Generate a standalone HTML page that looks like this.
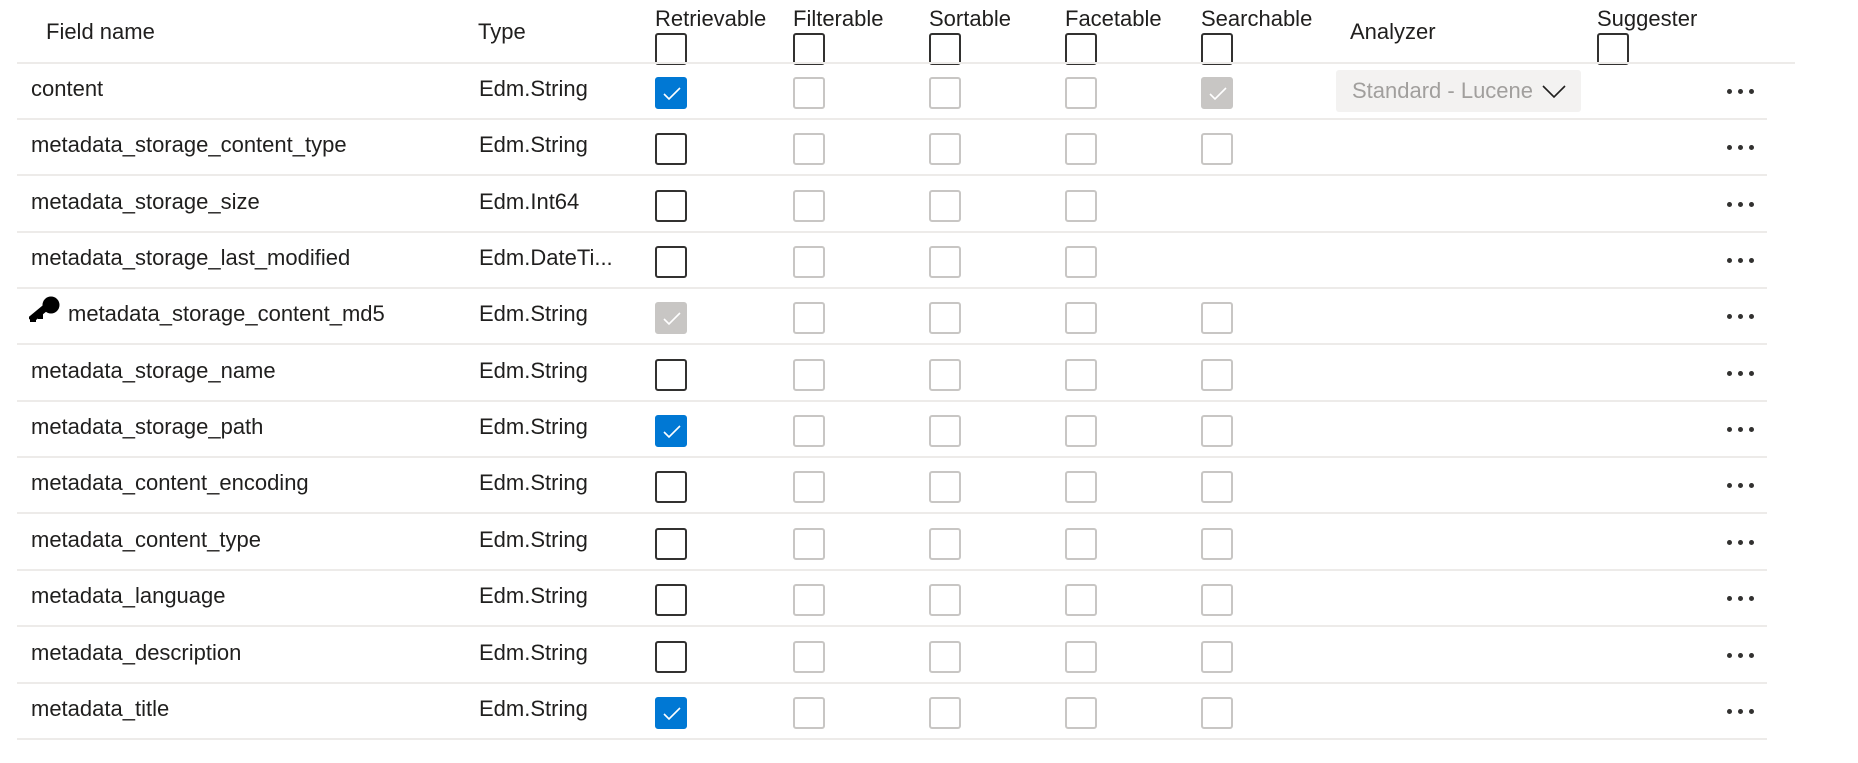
<!DOCTYPE html>
<html><head><meta charset="utf-8"><style>
body{margin:0;width:1858px;height:763px;background:#fff;font-family:"Liberation Sans",sans-serif;color:#201f1e;position:relative;overflow:hidden}
.a{position:absolute}
.h{font-size:22px;line-height:24px}
.cb{position:absolute;width:28px;height:28px;border:2px solid #323130;border-radius:3px;box-sizing:content-box}
.g{border-color:#c8c6c4}
.c{background:#0078d4;border-color:#0078d4}
.d{background:#c8c6c4;border-color:#c8c6c4}
.cb svg{position:absolute;left:5px;top:7px}
.row{position:absolute;left:17px;width:1750px;height:56px;border-bottom:2px solid #edebe9;box-sizing:border-box}
.t{position:absolute;font-size:22px;line-height:54px;top:-2px}
.dots{position:absolute;left:1710px;top:25px;height:5px;width:40px}
.dots i{float:left;width:5px;height:5px;border-radius:50%;background:#323130;margin-right:6px}
</style></head><body>
<div class="a h" style="left:46px;top:20px">Field name</div>
<div class="a h" style="left:478px;top:20px">Type</div>
<div class="a h" style="left:655px;top:7px">Retrievable</div>
<div class="a h" style="left:793px;top:7px">Filterable</div>
<div class="a h" style="left:929px;top:7px">Sortable</div>
<div class="a h" style="left:1065px;top:7px">Facetable</div>
<div class="a h" style="left:1201px;top:7px">Searchable</div>
<div class="a h" style="left:1350px;top:20px">Analyzer</div>
<div class="a h" style="left:1597px;top:7px">Suggester</div>
<div class="cb" style="left:655px;top:33px"></div>
<div class="cb" style="left:793px;top:33px"></div>
<div class="cb" style="left:929px;top:33px"></div>
<div class="cb" style="left:1065px;top:33px"></div>
<div class="cb" style="left:1201px;top:33px"></div>
<div class="cb" style="left:1597px;top:33px"></div>
<div class="a" style="left:17px;top:62px;width:1778px;height:2px;background:#edebe9"></div>
<div id="rows"></div>
<script>
var C='<svg width="20" height="16" viewBox="0 0 20 16"><path d="M2 8 L7 13 L18 2" fill="none" stroke="#fff" stroke-width="1.6"/></svg>';
var rows=[["content","Edm.String","c","d",1],["metadata_storage_content_type","Edm.String","u","g"],["metadata_storage_size","Edm.Int64","u",""],["metadata_storage_last_modified","Edm.DateTi...","u",""],["metadata_storage_content_md5","Edm.String","d","g",0,1],["metadata_storage_name","Edm.String","u","g"],["metadata_storage_path","Edm.String","c","g"],["metadata_content_encoding","Edm.String","u","g"],["metadata_content_type","Edm.String","u","g"],["metadata_language","Edm.String","u","g"],["metadata_description","Edm.String","u","g"],["metadata_title","Edm.String","c","g"]];
var h='';
rows.forEach(function(r,i){var top=64+56.35*i;
h+='<div class="row" style="top:'+top+'px">';
if(r[5]){h+='<svg class="a" style="left:12px;top:7px" width="32" height="26" viewBox="0 0 32 26"><circle cx="22" cy="9" r="8.5" fill="#000"/><path d="M16 12 L4 22" stroke="#000" stroke-width="7" stroke-linecap="square"/><rect x="9" y="16" width="5" height="7" fill="#000"/><rect x="1" y="21" width="6" height="5" fill="#000"/></svg><div class="t" style="left:51px">'+r[0]+'</div>';}
else h+='<div class="t" style="left:14px">'+r[0]+'</div>';
h+='<div class="t" style="left:462px">'+r[1]+'</div>';
var cls=r[2]=='c'?'c':(r[2]=='d'?'d':'');
h+='<div class="cb '+cls+'" style="left:638px;top:13px">'+(cls?C:'')+'</div>';
[776,912,1048].forEach(function(x){h+='<div class="cb g" style="left:'+x+'px;top:13px"></div>';});
if(r[3]=='d')h+='<div class="cb d" style="left:1184px;top:13px">'+C+'</div>';
else if(r[3]=='g')h+='<div class="cb g" style="left:1184px;top:13px"></div>';
if(r[4])h+='<div class="a" style="left:1319px;top:6px;width:245px;height:42px;background:#f3f2f1;border-radius:3px"><div class="a" style="left:16px;top:0;line-height:42px;font-size:22px;color:#a19f9d">Standard - Lucene</div><svg class="a" style="left:206px;top:15px" width="24" height="14" viewBox="0 0 24 14"><path d="M1 1 L12 12 L23 1" fill="none" stroke="#201f1e" stroke-width="1.6"/></svg></div>';
h+='<div class="dots"><i></i><i></i><i></i></div></div>';});
document.getElementById('rows').innerHTML=h;
</script>
</body></html>
